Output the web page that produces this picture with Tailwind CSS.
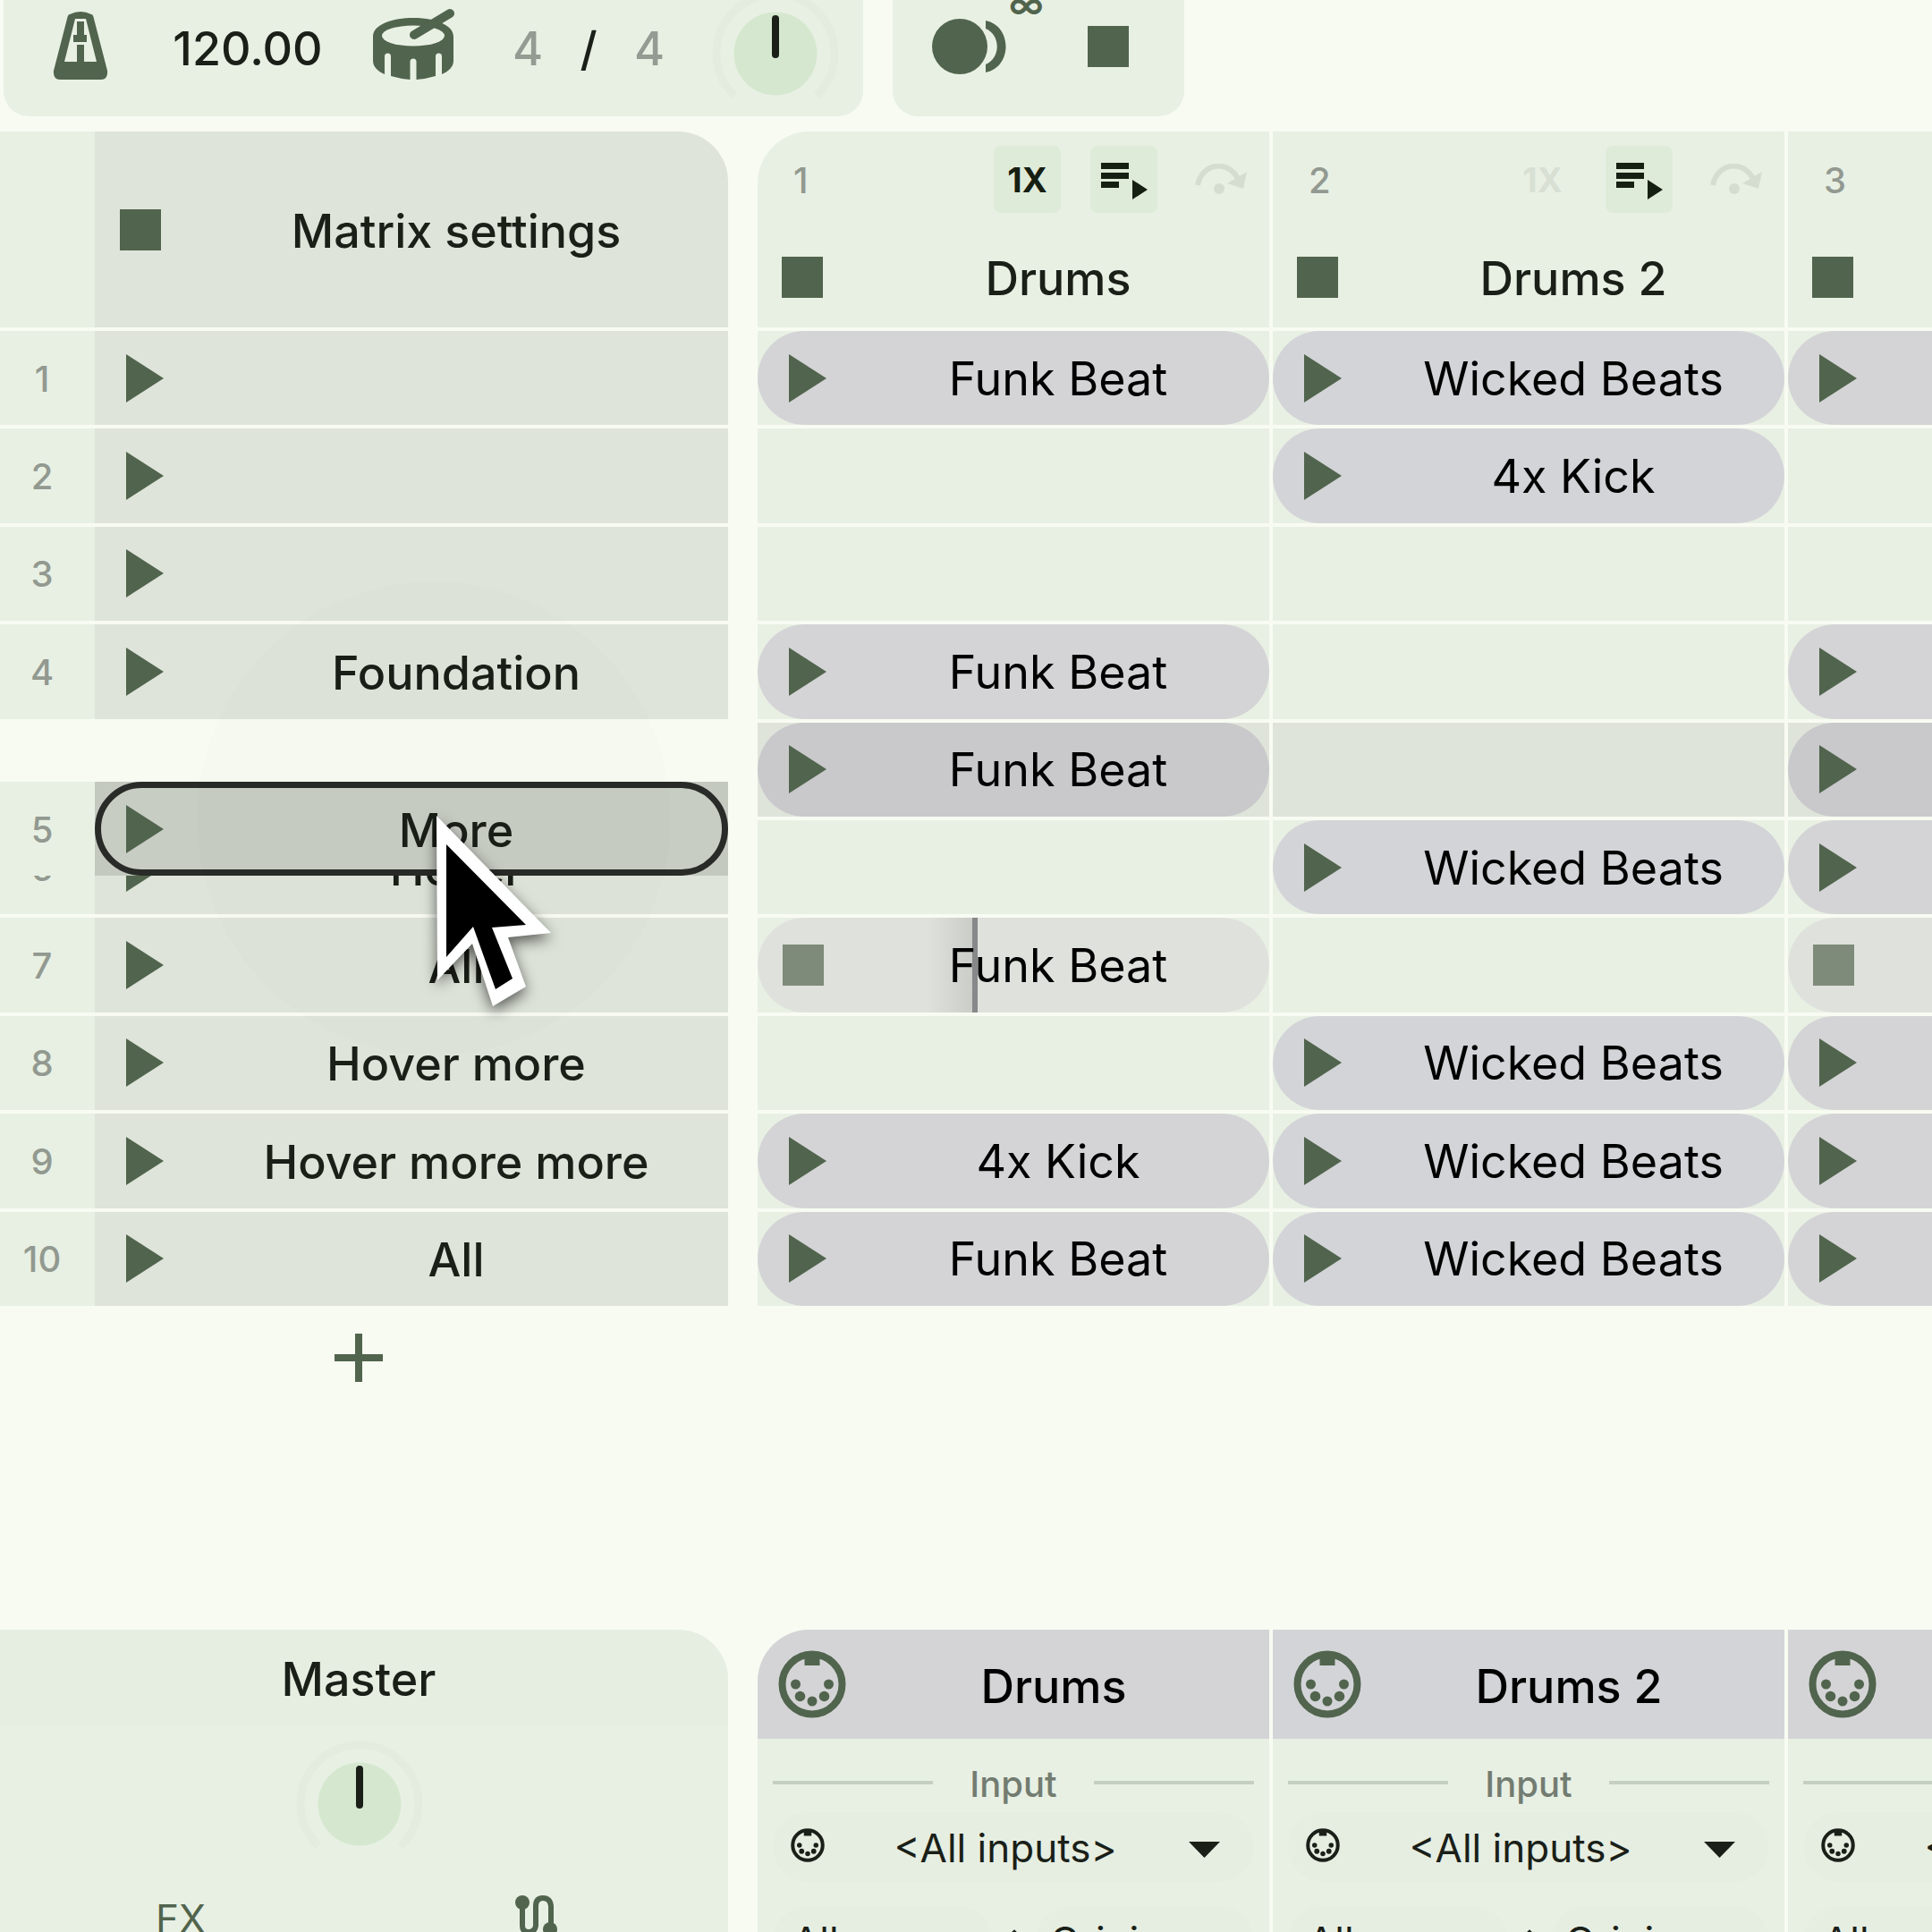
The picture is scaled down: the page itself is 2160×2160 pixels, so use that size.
<!DOCTYPE html>
<html lang="en">
<head>
<meta charset="utf-8">
<title>Clip matrix</title>
<script src="https://cdn.jsdelivr.net/npm/@tailwindcss/browser@4"></script>
</head>
<body class="relative h-screen overflow-hidden bg-[#f8fbf2] font-['Inter',sans-serif] text-[52px] leading-[60px] text-[#1a1f18]">

<svg class="hidden" aria-hidden="true">
  <symbol id="play" viewBox="0 0 42 54"><path d="M0 0 42 27 0 54z" fill="currentColor"/></symbol>
  <symbol id="midi" viewBox="0 0 76 76">
    <circle cx="38" cy="38" r="33.5" fill="none" stroke="currentColor" stroke-width="8"/>
    <path d="M29.500 4h17v13h-17z" fill="currentColor"/>
    <g fill="currentColor"><circle cx="19.500" cy="38" r="5.500"/><circle cx="56.500" cy="38" r="5.500"/><circle cx="24.500" cy="51.500" r="5.800"/><circle cx="51.500" cy="51.500" r="5.800"/><circle cx="38" cy="57" r="5.500"/></g>
  </symbol>
  <symbol id="queue" viewBox="0 0 52 44">
    <path d="M0 3h31v7H0zM0 14h31v7H0zM0 24h20v7H0zM35 22l17 11-17 11z" fill="currentColor"/>
  </symbol>
  <symbol id="skip" viewBox="0 0 58 36">
    <path d="M3 24C8 -2 39 -5 49 19" fill="none" stroke="currentColor" stroke-width="6"/>
    <path d="M58 9 54 28 36 22z" fill="currentColor"/><circle cx="27" cy="28" r="6" fill="currentColor"/>
  </symbol>
  <symbol id="knob" viewBox="0 0 144 130">
    <path d="M26 119A66 66 0 1 1 118 119" fill="none" stroke="#e4ece0" stroke-width="9"/>
    <circle cx="72" cy="72" r="46.500" fill="#d5e8cf"/>
    <path d="M72 33V73" stroke="#1a1f18" stroke-width="8" stroke-linecap="round"/>
  </symbol>
</svg>

<header class="flex h-[130px] gap-[33px] pl-1 text-[#51644d]">
  <section class="flex h-[130px] w-[961px] shrink-0 items-start rounded-b-[28px] bg-[#e8f0e4]" aria-label="Tempo">
    <button class="mt-[12px] ml-[55px]" aria-label="Metronome">
      <svg class="h-[77px] w-[62px]" viewBox="0 0 62 77">
        <path fill="currentColor" fill-rule="evenodd" d="M19 4Q31-2 43 4Q45 4 46 9L61 67Q62 77 54 77H8Q0 77 1 67L16 9Q17 4 19 4ZM25 9 13 57H49L37 9Z"/>
        <path fill="currentColor" d="M27 12h8v15h3v8H23v-8h4zM27 38h8v20h-8z"/>
      </svg>
    </button>
    <input class="mt-[25px] ml-[58px] w-[196px] bg-transparent text-center font-medium text-[#1a1f18]" value="120.00" aria-label="Tempo in BPM">
    <button class="mt-[8px] ml-[40px]" aria-label="Time signature">
      <svg class="h-[82px] w-[94px]" viewBox="0 0 94 82">
        <path fill="currentColor" d="M2 33C2 5 92 5 92 33V60C92 67 86 72 79 75V55A3.500 3.500 0 0 0 72 55V77Q62 80 50.500 81V61A3.500 3.500 0 0 0 43.500 61V81Q32 80 22 77V55A3.500 3.500 0 0 0 15 55V75C8 72 2 67 2 60Z"/>
        <ellipse cx="47" cy="38" rx="36" ry="16" fill="currentColor"/>
        <ellipse cx="47" cy="32" rx="35" ry="11.500" fill="#e8f0e4"/>
        <path d="M48 31 88 7" stroke="currentColor" stroke-width="10" stroke-linecap="round"/>
      </svg>
    </button>
    <div class="mt-[25px] ml-[56px] flex w-[186px] justify-between font-medium text-[#949b92]"><span class="w-[50px] text-center">4</span><span class="text-[#1a1f18]">/</span><span class="w-[50px] text-center">4</span></div>
    <button class="-mt-[12px] ml-[44px]" aria-label="Tempo volume"><svg class="h-[130px] w-[144px]"><use href="#knob"/></svg></button>
  </section>
  <section class="relative flex h-[130px] w-[326px] shrink-0 items-start rounded-b-[28px] bg-[#e8f0e4]" aria-label="Transport">
    <button class="mt-[21px] ml-[44px]" aria-label="Record">
      <svg class="h-[62px] w-[86px]" viewBox="0 0 86 62"><circle cx="31" cy="31" r="31" fill="currentColor"/><path d="M60 2C90 8 90 54 60 60V51C77 44 77 18 60 11Z" fill="currentColor"/></svg>
    </button>
    <span class="absolute -top-[24px] left-[130px] text-[40px] font-semibold">∞</span>
    <button class="mt-[29px] ml-[88px] size-[46px] bg-[#51644d]" aria-label="Stop all"></button>
  </section>
</header>

<main class="mt-[17px]">
  <div class="flex gap-[33px]">
    <section class="w-[814px] shrink-0" aria-label="Scenes">
      <div class="mb-1 grid h-[219px] grid-cols-[106px_708px]">
        <div class="bg-[#e8f0e4]"></div>
        <div class="grid grid-cols-[100px_1fr] items-center rounded-tr-[56px] bg-[#dee4da]">
          <button class="ml-[28px] size-[46px] bg-[#51644d]" aria-label="Stop matrix"></button>
          <h2 class="pt-1 text-center font-medium">Matrix settings</h2>
        </div>
      </div>
      <div id="scenes" class="relative grid h-[1090px] grid-rows-10 gap-1"></div>
      <button class="mt-[30px] ml-[373px] block size-[56px] text-[#51644d]" aria-label="Add scene">
        <svg class="size-[56px]" viewBox="0 0 56 56"><path d="M28 1v54M1 28h54" fill="none" stroke="currentColor" stroke-width="8"/></svg>
      </button>
    </section>
    <section id="tracks" class="flex gap-1" aria-label="Tracks"></section>
  </div>

  <div class="mt-[276px] flex gap-[33px]">
    <section class="h-[500px] w-[814px] shrink-0 overflow-hidden rounded-tr-[56px] bg-[#e8f0e4]">
      <h2 class="flex h-[107px] items-center justify-center bg-[#e6eee2] pt-1 pr-[12px] font-medium">Master</h2>
      <button class="mt-[16px] ml-[330px] block" aria-label="Master volume"><svg class="h-[130px] w-[144px]"><use href="#knob"/></svg></button>
      <div class="mt-[44px] flex items-start justify-between pr-[191px] pl-[174px] text-[#51644d]">
        <button class="text-[44px] leading-[52px]">FX</button>
        <button aria-label="Routing"><svg class="h-[60px] w-[48px]" viewBox="0 0 48 60"><path d="M9 8V34Q9 41 16 41T24 34V12Q24 3 32 3T41 12V40" fill="none" stroke="currentColor" stroke-width="6"/><circle cx="9" cy="8" r="8" fill="currentColor"/><circle cx="40" cy="38" r="8" fill="currentColor"/></svg></button>
      </div>
    </section>
    <div id="mixer" class="flex gap-1"></div>
  </div>
</main>

<div class="pointer-events-none absolute top-[650px] left-[220px] size-[530px] rounded-full bg-[#1a1f18]/[0.006]"></div>
<svg class="pointer-events-none absolute top-[900px] left-[478px] z-20 h-[250px] w-[160px] drop-shadow-[0_6px_8px_rgba(0,0,0,0.6)]" viewBox="0 0 160 250" aria-hidden="true">
  <path d="M10 12 138 143 90 148 110 203 73 225 50 155 11 196Z" fill="#fff"/>
  <path d="M21 44 110 134 72 137 95 194 76 206 51 136 21 170Z" fill="#000"/>
</svg>

<script>
const play = '<svg class="h-[54px] w-[42px] text-[#51644d]"><use href="#play"/></svg>';
const scene = (n, name) => `
  <div class="grid h-full grid-cols-[106px_708px]">
    <div class="flex items-center justify-center bg-[#e8f0e4] pt-[2px] pr-[12px] text-[40px] font-medium text-[#929990]">${n}</div>
    <div class="grid grid-cols-[100px_1fr] items-center bg-[#dee4da]">
      <button class="ml-[35px] w-[42px]" aria-label="Play scene ${n}">${play}</button><span class="pt-1 text-center font-medium">${name}</span>
    </div>
  </div>`;
const names = ['', '', '', 'Foundation', null, 'Hover', 'All', 'Hover more', 'Hover more more', 'All'];
document.getElementById('scenes').innerHTML =
  names.map((name, i) => name === null ? '<div></div>' : scene(i + 1, name)).join('') + `
  <div class="absolute top-[504px] left-0 grid h-[105px] grid-cols-[106px_708px]">
    <div class="flex items-center justify-center bg-[#e8f0e4] pt-[2px] pr-[12px] text-[40px] font-medium text-[#929990]">5</div>
    <div class="bg-[#c4c9c0]">
      <div class="grid h-full grid-cols-[93px_1fr] items-center rounded-full border-[7px] border-[#282b27] bg-[#c8cdc4]">
        <button class="ml-[28px] w-[42px]" aria-label="Play scene 5">${play}</button><span class="pt-1 pl-[7px] text-center font-medium">More</span>
      </div>
    </div>
  </div>`;

const tracks = [
  { name: 'Drums', once: true, round: 'rounded-tl-[58px]', color: 'bg-[#d4d4d6]',
    clips: ['Funk Beat', '', '', 'Funk Beat', 'Funk Beat', '', '*Funk Beat', '', '4x Kick', 'Funk Beat'] },
  { name: 'Drums 2', once: false, round: '', color: 'bg-[#d3d4d8]',
    clips: ['Wicked Beats', '4x Kick', '', '', '', 'Wicked Beats', '', 'Wicked Beats', 'Wicked Beats', 'Wicked Beats'] },
  { name: 'Drums 3', once: false, round: '', color: 'bg-[#d4d4d6]',
    clips: ['Funk Beat', '', '', 'Funk Beat', 'Funk Beat', 'Funk Beat', '*Funk Beat', 'Funk Beat', 'Funk Beat', 'Funk Beat'] },
];
const clip = (c, i, color) => {
  const cell = i === 4 ? 'bg-[#dee4da]' : 'bg-[#e8f0e4]';
  if (!c) return `<div class="${cell}"></div>`;
  if (c[0] === '*') return `
    <div class="${cell}"><div class="relative grid h-full grid-cols-[100px_1fr] items-center overflow-hidden rounded-full bg-[#dfe1dd]">
      <div class="absolute inset-y-0 left-[190px] w-[56px] border-r-[6px] border-[#86888a] bg-linear-to-r from-[#dfe1dd] to-[#cbcdc9]"></div>
      <button class="ml-[28px] size-[46px] bg-[#7e8a7a]" aria-label="Stop clip"></button><span class="relative pt-[2px] text-center text-black">${c.slice(1)}</span>
    </div></div>`;
  return `
    <div class="${cell}"><div class="grid h-full grid-cols-[100px_1fr] items-center rounded-full ${i === 4 ? 'bg-[#c9c8cb]' : color}">
      <button class="ml-[35px] w-[42px]" aria-label="Play clip">${play}</button><span class="pt-[2px] text-center text-black">${c}</span>
    </div></div>`;
};
document.getElementById('tracks').innerHTML = tracks.map((t, k) => `
  <div class="w-[572px] shrink-0">
    <div class="mb-1 h-[219px] bg-[#e8f0e4] ${t.round}">
      <div class="flex h-[107px] items-center gap-[33px] pr-[17px] pl-[40px]">
        <span class="mr-auto pt-[2px] text-[40px] font-medium text-[#929990]">${k + 1}</span>
        <button class="size-[75px] rounded-lg text-[38px] font-bold ${t.once ? 'bg-[#dfebd9] text-[#162012]' : 'text-[#d8dfd3]'}">1X</button>
        <button class="flex size-[75px] items-center justify-center rounded-lg bg-[#dfebd9] text-[#162012]" aria-label="Follow"><svg class="h-[44px] w-[52px]"><use href="#queue"/></svg></button>
        <button class="flex size-[75px] items-center justify-center text-[#d5ddd0]" aria-label="Skip"><svg class="h-[36px] w-[58px]"><use href="#skip"/></svg></button>
      </div>
      <div class="grid h-[112px] grid-cols-[100px_1fr] items-center">
        <button class="ml-[27px] size-[46px] bg-[#51644d]" aria-label="Stop track"></button><h2 class="pt-1 text-center font-medium">${t.name}</h2>
      </div>
    </div>
    <div class="grid h-[1090px] grid-rows-10 gap-1">${t.clips.map((c, i) => clip(c, i, t.color)).join('')}</div>
  </div>`).join('');

document.getElementById('mixer').innerHTML = tracks.map((t, k) => `
  <section class="h-[500px] w-[572px] shrink-0 overflow-hidden bg-[#e8f0e4] ${t.round}">
    <div class="grid h-[122px] grid-cols-[90px_1fr] items-center ${t.color}">
      <svg class="ml-[23px] size-[76px] text-[#51644d]"><use href="#midi"/></svg><h2 class="pt-[6px] text-center font-medium text-black">${t.name}</h2>
    </div>
    <div class="mt-[20px] flex h-[58px] items-center px-[17px] text-[40px] font-medium text-[#737c71]">
      <span class="h-1 flex-1 bg-[#c5cfc0]"></span><label for="input${k}" class="w-[180px] pt-1 text-center">Input</label><span class="h-1 flex-1 bg-[#c5cfc0]"></span>
    </div>
    <div class="relative mx-[17px] mt-[4px] h-[78px]">
      <select id="input${k}" class="h-full w-full appearance-none rounded-full bg-[#e6eee2] pt-[2px] pr-[90px] pl-[72px] [text-align-last:center] text-[44px] leading-[54px]"><option>&lt;All inputs&gt;</option></select>
      <svg class="absolute top-[18px] left-[20px] size-[38px]"><use href="#midi"/></svg>
      <svg class="absolute top-[33px] right-[38px] h-[18px] w-[35px]" viewBox="0 0 35 18"><path d="M0 0H35L17.500 18Z" fill="currentColor"/></svg>
    </div>
    <div class="mx-[17px] mt-[27px] flex h-[78px] items-center justify-between">
      <select class="h-full w-[246px] appearance-none rounded-full bg-[#e6eee2] pl-[22px] text-[44px]" aria-label="Channel"><option>All</option></select>
      <svg class="h-[26px] w-[24px]" viewBox="0 0 24 26"><path d="M12 26V3M3 12l9-9 9 9" fill="none" stroke="currentColor" stroke-width="4"/></svg>
      <select class="h-full w-[244px] appearance-none rounded-full bg-[#e6eee2] pl-[16px] text-[44px]" aria-label="Transpose"><option>Origin</option></select>
    </div>
  </section>`).join('');
</script>
</body>
</html>
